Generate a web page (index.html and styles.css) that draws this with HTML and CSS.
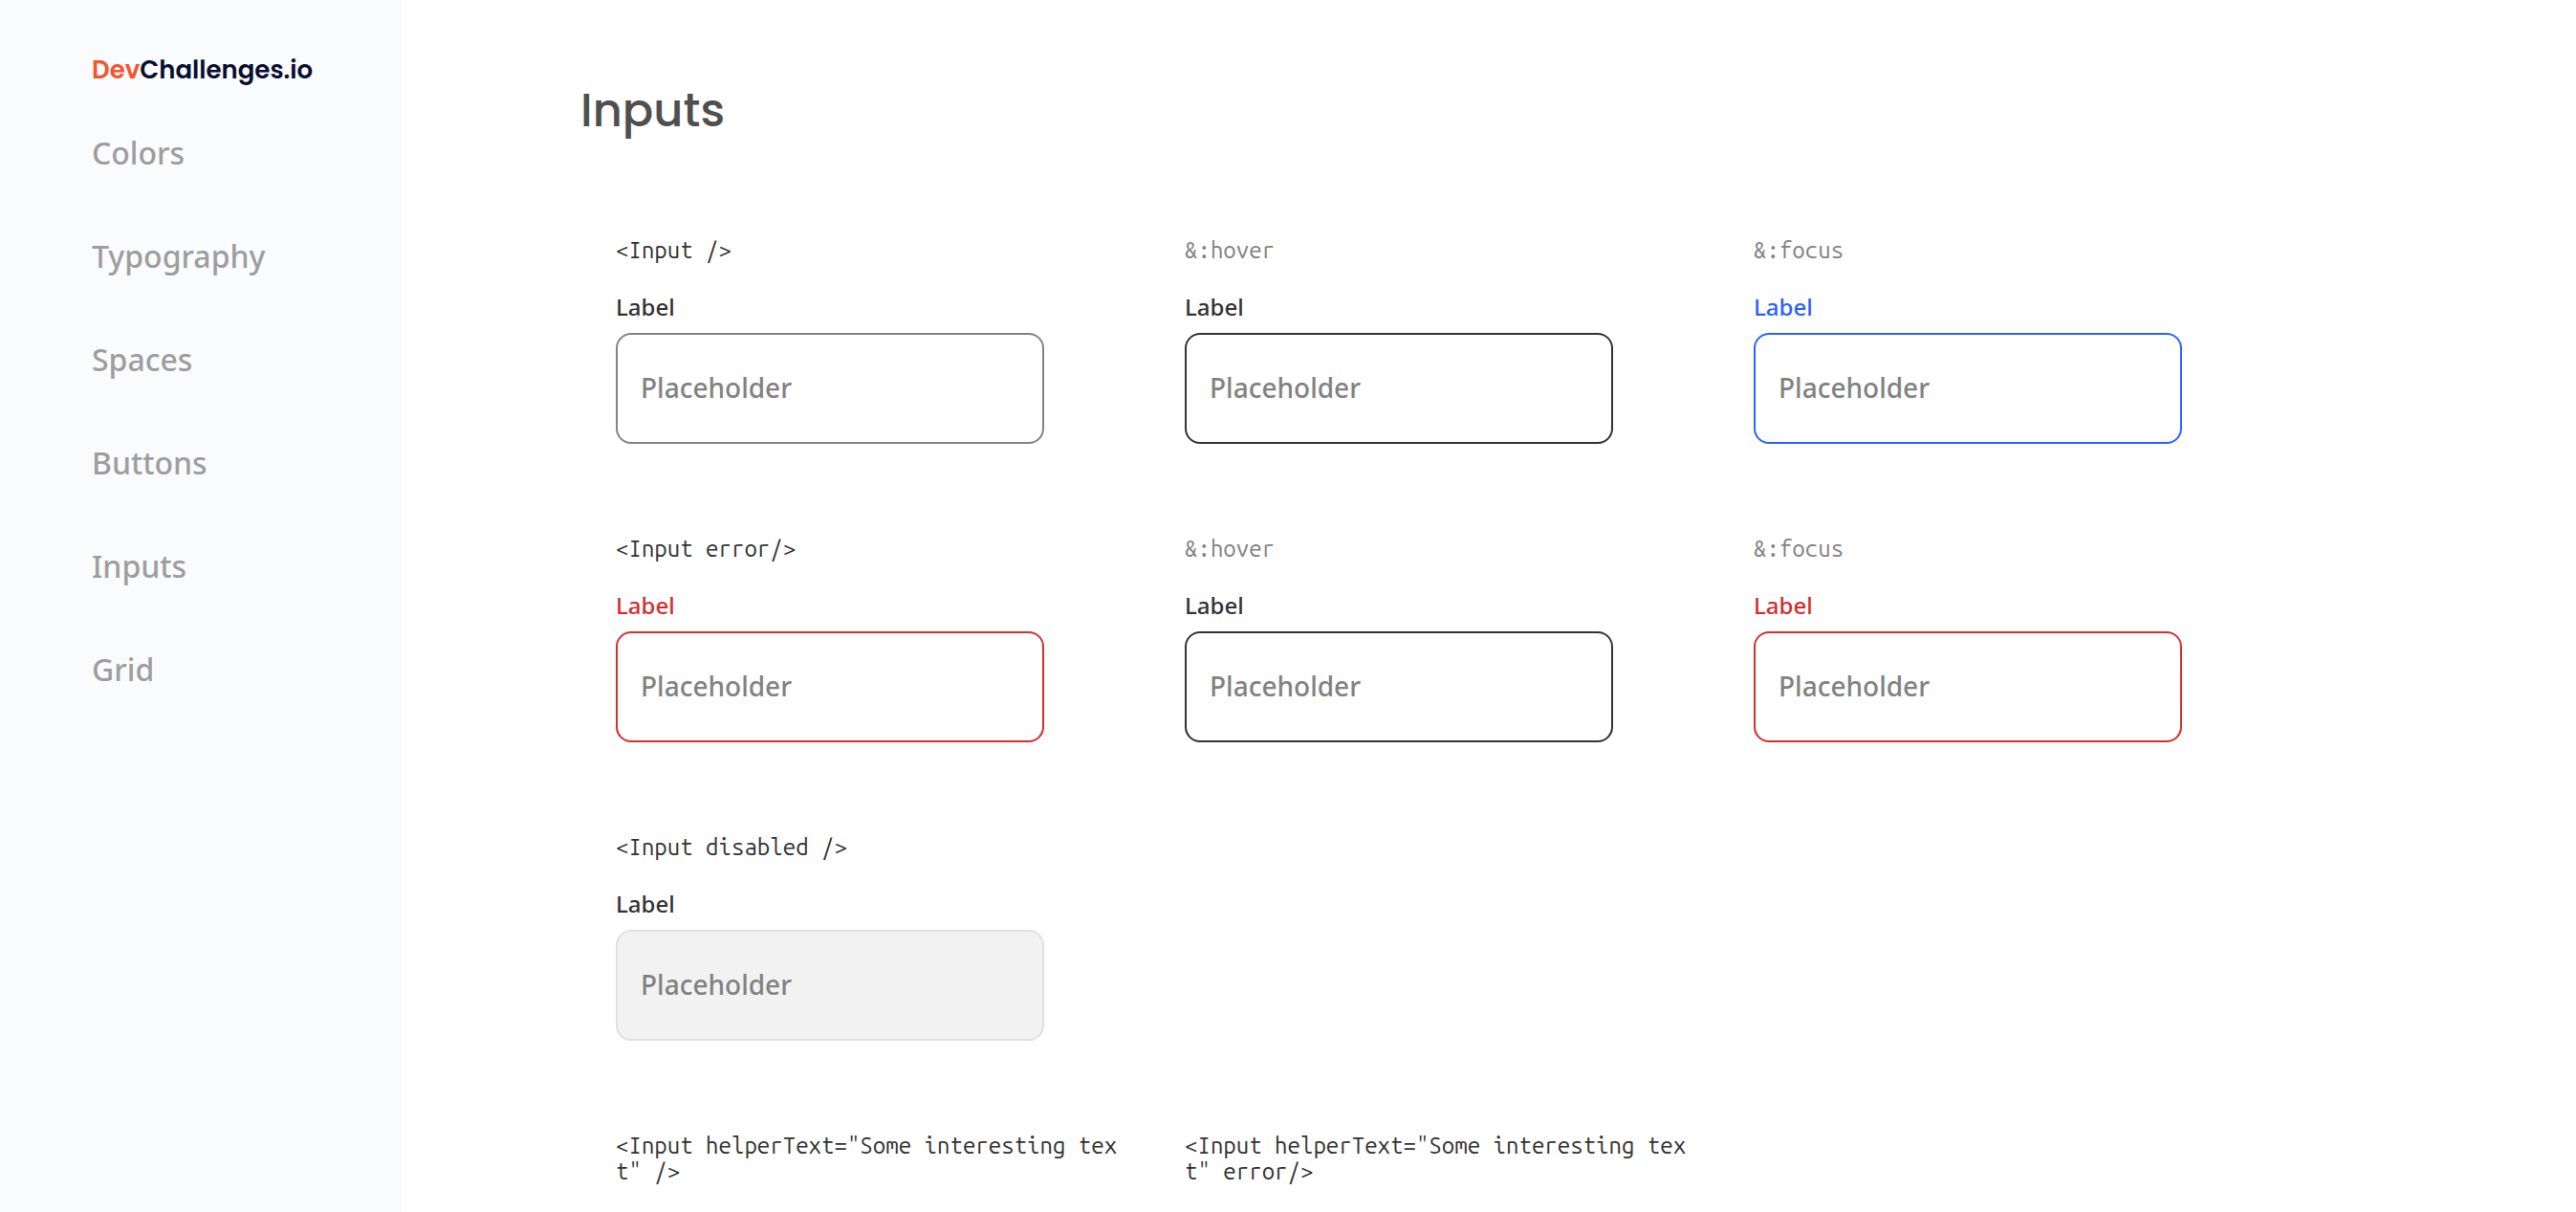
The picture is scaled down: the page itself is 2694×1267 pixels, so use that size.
FILE: index.html
```html
<!DOCTYPE html>
<html lang="en">
<head>
<meta charset="utf-8">
<title>Inputs</title>
<link rel="stylesheet" href="styles.css">
</head>
<body>
<div class="page">
<aside class="sidebar">
<div class="logo"><span class="logo-accent">Dev</span>Challenges.io</div>
<nav class="nav">
<a href="#colors">Colors</a>
<a href="#typography">Typography</a>
<a href="#spaces">Spaces</a>
<a href="#buttons">Buttons</a>
<a href="#inputs">Inputs</a>
<a href="#grid">Grid</a>
</nav>
</aside>
<main class="content">
<h1 class="title">Inputs</h1>
<div class="grid">
<section class="cell"><code class="code">&lt;Input /&gt;</code><div class="field"><label for="a1">Label</label><input id="a1" type="text" placeholder="Placeholder"></div></section>
<section class="cell"><code class="code muted">&amp;:hover</code><div class="field is-hover"><label for="a2">Label</label><input id="a2" type="text" placeholder="Placeholder"></div></section>
<section class="cell"><code class="code muted">&amp;:focus</code><div class="field is-focus"><label for="a3">Label</label><input id="a3" type="text" placeholder="Placeholder"></div></section>
<section class="cell"><code class="code">&lt;Input error/&gt;</code><div class="field is-error"><label for="b1">Label</label><input id="b1" type="text" placeholder="Placeholder"></div></section>
<section class="cell"><code class="code muted">&amp;:hover</code><div class="field is-hover"><label for="b2">Label</label><input id="b2" type="text" placeholder="Placeholder"></div></section>
<section class="cell"><code class="code muted">&amp;:focus</code><div class="field is-error"><label for="b3">Label</label><input id="b3" type="text" placeholder="Placeholder"></div></section>
<section class="cell row-start"><code class="code">&lt;Input disabled /&gt;</code><div class="field"><label for="c1">Label</label><input id="c1" type="text" placeholder="Placeholder" disabled></div></section>
<section class="cell row-start"><code class="code">&lt;Input helperText="Some interesting text" /&gt;</code></section>
<section class="cell"><code class="code">&lt;Input helperText="Some interesting text" error/&gt;</code></section>
</div>
</main>
</div>
</body>
</html>
```
FILE: styles.css
```css
* { box-sizing: border-box; }
body {
  margin: 0;
  background: #fff;
  color: #333;
  font-family: "Noto Sans", sans-serif;
  font-weight: 500;
}
.page {
  display: flex;
  height: 100vh;
  overflow: hidden;
}
.sidebar {
  flex: none;
  width: 420px;
  padding: 54px 96px;
  background: #fafbfd;
}
.logo {
  color: #090f31;
  font-family: Poppins, sans-serif;
  font-size: 26px;
  font-weight: 600;
  line-height: 38px;
}
.logo-accent { color: #f7542e; }
.nav {
  display: flex;
  flex-direction: column;
  gap: 64px;
  margin-top: 46px;
}
.nav a {
  color: #9e9e9e;
  font-size: 32px;
  line-height: 44px;
  text-decoration: none;
}
.content {
  flex: 1;
  min-width: 0;
  padding: 77px 265px 0 187px;
}
.title {
  margin: 0 0 80px;
  color: #4f4f4f;
  font-family: Poppins, sans-serif;
  font-size: 48px;
  font-weight: 500;
  line-height: 78px;
}
.grid {
  display: grid;
  grid-template-columns: repeat(3, minmax(0, 1fr));
  row-gap: 96px;
  padding: 13px 0 0 37px;
}
.row-start { grid-column-start: 1; }
.cell { padding-right: 56px; }
.code {
  display: block;
  color: #333;
  font-family: "Ubuntu Mono", "Noto Sans Mono", monospace;
  font-size: 24px;
  font-weight: 400;
  line-height: 27px;
  word-break: break-all;
}
.muted { color: #828282; }
.field {
  display: flex;
  flex-direction: column;
  align-items: flex-start;
  gap: 9px;
  margin-top: 28px;
}
.field label {
  font-size: 24px;
  line-height: 36px;
}
.field input {
  width: 448px;
  max-width: 100%;
  height: 116px;
  padding: 0 24px 2px;
  border: 2px solid #828282;
  border-radius: 16px;
  background: #fff;
  font: 500 28px "Noto Sans", sans-serif;
}
.field input::placeholder { color: #828282; opacity: 1; }
.field input:disabled { background: #f2f2f2; border-color: #e0e0e0; }
.is-hover input { border-color: #333; }
.is-focus label { color: #2962ff; }
.is-focus input { border-color: #2962ff; }
.is-error label { color: #d32f2f; }
.is-error input { border-color: #d32f2f; }
```
